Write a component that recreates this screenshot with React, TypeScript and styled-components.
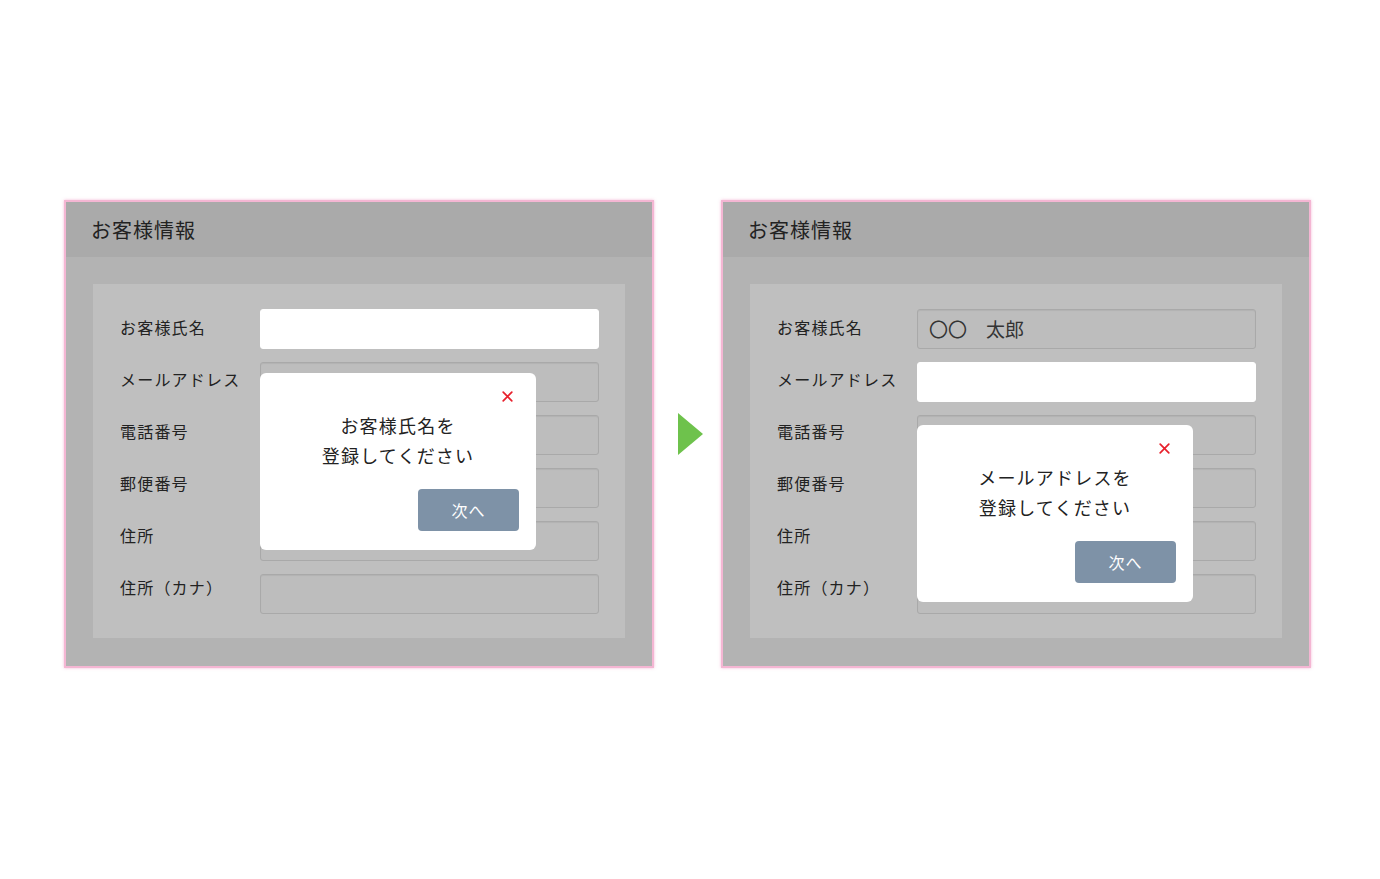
import { createGlobalStyle, styled } from "styled-components";

const GlobalStyle = createGlobalStyle`
  html, body {
    margin: 0;
    padding: 0;
    background: #ffffff;
  }
  body {
    font-family: "Noto Sans CJK JP", "Noto Sans", sans-serif;
    color: #222222;
  }
`;

const FIELDS = ["お客様氏名", "メールアドレス", "電話番号", "郵便番号", "住所", "住所（カナ）"];

const Page = styled.div`
  width: 1380px;
  height: 879px;
  box-sizing: border-box;
  padding: 200px 0 0 64px;
  display: flex;
  align-items: flex-start;
`;

const Panel = styled.section`
  width: 590px;
  height: 468px;
  box-sizing: border-box;
  border: 2px solid #f4b6d3;
  box-shadow: 0 0 3px rgba(240, 160, 200, 0.7);
  background: #b3b3b3;
  display: flex;
  flex-direction: column;
`;

const Header = styled.header`
  height: 55px;
  background: #aaaaaa;
  display: flex;
  align-items: center;
  padding-left: 25px;
  font-size: 20px;
  letter-spacing: 1px;
  color: #222222;
`;

const Body = styled.div`
  flex: 1;
  padding: 27px 27px 28px 27px;
  display: flex;
`;

const Inner = styled.div`
  position: relative;
  flex: 1;
  background: #bfbfbf;
  padding: 25px 26px 24px 27px;
  display: flex;
  align-items: flex-start;
`;

const LabelColumn = styled.div`
  width: 140px;
  margin-top: -2px;
  display: flex;
  flex-direction: column;
  gap: 12px;
`;

const InputColumn = styled.div`
  flex: 1;
  display: flex;
  flex-direction: column;
  gap: 13px;
`;

const Label = styled.div`
  height: 40px;
  display: flex;
  align-items: center;
  font-size: 16px;
  letter-spacing: 1.2px;
  color: #222222;
`;

const Input = styled.div<{ $active?: boolean }>`
  height: 40px;
  box-sizing: border-box;
  border-radius: 3px;
  border: 1px solid ${(p) => (p.$active ? "#ffffff" : "#a9a9a9")};
  background: ${(p) => (p.$active ? "#ffffff" : "#bdbdbd")};
  box-shadow: ${(p) => (p.$active ? "none" : "inset 0 1px 1px rgba(0,0,0,0.06)")};
  display: flex;
  align-items: center;
  padding: 0 0 2px 11px;
  font-size: 19px;
  color: #333333;
`;

const Modal = styled.div<{ $top: number }>`
  position: absolute;
  left: 167px;
  top: ${(p) => p.$top}px;
  width: 276px;
  height: 177px;
  box-sizing: border-box;
  background: #ffffff;
  border-radius: 6px;
  padding: 37px 17px 19px 17px;
  display: flex;
  flex-direction: column;
`;

const Close = styled.div`
  position: absolute;
  top: 18px;
  right: 23px;
  width: 11px;
  height: 11px;

  svg {
    display: block;
  }
`;

const Message = styled.p`
  margin: 0;
  text-align: center;
  font-size: 18px;
  line-height: 30px;
  letter-spacing: 1.2px;
  color: #222222;
`;

const Footer = styled.div`
  margin-top: auto;
  display: flex;
  justify-content: flex-end;
`;

const NextButton = styled.button`
  width: 101px;
  height: 42px;
  border: none;
  border-radius: 4px;
  background: #7e92a7;
  color: #ffffff;
  font-family: inherit;
  font-size: 16px;
  letter-spacing: 1px;
`;

const ArrowSlot = styled.div`
  width: 67px;
  height: 468px;
  box-sizing: border-box;
  padding-left: 5px;
  display: flex;
  align-items: center;
  justify-content: center;

  svg {
    display: block;
  }
`;

function CloseIcon() {
  return (
    <Close>
      <svg width="11" height="11" viewBox="0 0 11 11">
        <path d="M1.2 1.2 L9.8 9.8 M9.8 1.2 L1.2 9.8" stroke="#e8202c" strokeWidth="1.7" strokeLinecap="round" />
      </svg>
    </Close>
  );
}

interface IForm {
  activeIndex: number;
  values: string[];
  modalTop: number;
  message: string;
}

function CustomerForm(props: IForm) {
  return (
    <Panel>
      <Header>お客様情報</Header>
      <Body>
        <Inner>
          <LabelColumn>
            {FIELDS.map((f) => (
              <Label key={f}>{f}</Label>
            ))}
          </LabelColumn>
          <InputColumn>
            {FIELDS.map((f, i) => (
              <Input key={f} $active={i === props.activeIndex}>
                {props.values[i] || ""}
              </Input>
            ))}
          </InputColumn>
          <Modal $top={props.modalTop}>
            <CloseIcon />
            <Message>
              {props.message}
              <br />
              登録してください
            </Message>
            <Footer>
              <NextButton>次へ</NextButton>
            </Footer>
          </Modal>
        </Inner>
      </Body>
    </Panel>
  );
}

export default function App() {
  return (
    <>
      <GlobalStyle />
      <Page>
        <CustomerForm activeIndex={0} values={[]} modalTop={89} message="お客様氏名を" />
        <ArrowSlot>
          <svg width="25" height="42" viewBox="0 0 25 42">
            <polygon points="0,0 25,21 0,42" fill="#6ec24c" />
          </svg>
        </ArrowSlot>
        <CustomerForm activeIndex={1} values={["〇〇　太郎"]} modalTop={141} message="メールアドレスを" />
      </Page>
    </>
  );
}
